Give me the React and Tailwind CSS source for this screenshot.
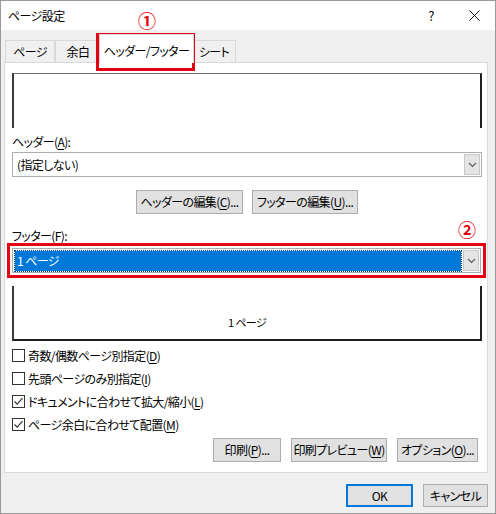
import React from "react";

const U = ({ children }) => <span className="underline underline-offset-2">{children}</span>;

const Btn = ({ className = "", children }) => (
  <div className={`h-[24px] flex items-center justify-center bg-[#e1e1e1] border border-[#adadad] ${className}`}>
    <span className="whitespace-nowrap">{children}</span>
  </div>
);

const Chevron = () => (
  <svg width="9" height="6" viewBox="0 0 9 6">
    <path d="M1 1 L4.5 4.5 L8 1" fill="none" stroke="#555" strokeWidth="1.1" />
  </svg>
);

const Select = ({ selected, children }) => (
  <div className="h-[25px] flex bg-white border border-[#abadb3] p-[1px]">
    <div className="flex-1 flex items-center">
      {selected ? (
        <div className="h-[20px] w-full ml-[1px] mr-[2px] flex items-center bg-[#0078d7] text-white pl-[2px] outline-1 outline-dotted outline-[#0a3d6b]">
          {children}
        </div>
      ) : (
        <div className="pl-[3px]">{children}</div>
      )}
    </div>
    <div className="w-[16px] flex items-center justify-center bg-[#e5e5e5] border border-[#c8c8c8]">
      <Chevron />
    </div>
  </div>
);

const Check = ({ checked, children }) => (
  <div className="h-[23px] flex items-center">
    <span className="w-[13px] h-[13px] border border-[#333] bg-white flex items-center justify-center">
      {checked && (
        <svg width="11" height="11" viewBox="0 0 11 11">
          <path d="M1.5 5.5 L4.2 8.2 L9.5 2.2" fill="none" stroke="#333" strokeWidth="1.2" />
        </svg>
      )}
    </span>
    <span className="ml-[3px] whitespace-nowrap">{children}</span>
  </div>
);

const Tab = ({ active, className = "", children }) =>
  active ? (
    <div className={`relative z-10 -mb-px h-[29px] bg-white border border-b-0 border-[#d9d9d9] flex items-center justify-center pt-[3px] whitespace-nowrap ${className}`}>
      {children}
    </div>
  ) : (
    <div className={`h-[22px] bg-[#f0f0f0] border border-b-0 border-[#d9d9d9] flex items-center justify-center whitespace-nowrap ${className}`}>
      {children}
    </div>
  );

export default function App() {
  return (
    <div className="relative w-[496px] h-[514px] flex flex-col bg-[#f0f0f0] border border-[#9a9a9a] text-[12px] tracking-[-0.6px] text-black font-['Noto_Sans_CJK_JP',sans-serif] [font-feature-settings:'palt']">
      {/* title bar */}
      <div className="h-[29px] bg-white flex items-center pl-[7px]">
        <span className="flex-1">ページ設定</span>
        <span className="w-[14px] text-center mr-[31px] text-[13px]">?</span>
        <svg width="11" height="11" viewBox="0 0 11 11" className="mr-[15px]">
          <path d="M0.5 0.5 L10.5 10.5 M10.5 0.5 L0.5 10.5" stroke="#111" strokeWidth="1" />
        </svg>
      </div>

      {/* tabs */}
      <div className="h-[32px] flex items-end pl-[4px]">
        <Tab className="w-[50px]">ページ</Tab>
        <Tab className="w-[46px]">余白</Tab>
        <Tab active className="w-[95px] -mx-[2px]">ヘッダー/フッター</Tab>
        <Tab className="w-[44px]">シート</Tab>
      </div>

      {/* panel */}
      <div className="ml-[3px] w-[484px] bg-white border border-[#d9d9d9] pt-[10px] pb-[10px] pl-[7px] pr-[5px] flex flex-col">
        <div className="h-[55px] border-t border-t-[#6b6b6b] border-l-2 border-l-[#3a3a3a] border-r-2 border-r-[#1e1e1e]" />

        <div className="mt-[6px] h-[16px] leading-[16px]">
          ヘッダー(<U>A</U>):
        </div>
        <div className="mt-[2px]">
          <Select>(指定しない)</Select>
        </div>

        <div className="mt-[13px] flex justify-center gap-[9px]">
          <Btn className="w-[107px]">
            ヘッダーの編集(<U>C</U>)...
          </Btn>
          <Btn className="w-[106px]">
            フッターの編集(<U>U</U>)...
          </Btn>
        </div>

        <div className="mt-[15px] h-[14px] leading-[14px]">
          フッター(<U>F</U>):
        </div>
        <div className="-ml-[5px] -mr-[4px] border-[3px] border-[#e60012] p-[2px]">
          <Select selected>1 ページ</Select>
        </div>

        <div className="mt-[8px] h-[55px] border-l-2 border-l-[#3a3a3a] border-r-2 border-r-[#1e1e1e] border-b-2 border-b-[#1e1e1e] flex items-end justify-center pb-[9px] text-[11px]">
          1 ページ
        </div>

        <div className="mt-[3px] flex flex-col">
          <Check>
            奇数/偶数ページ別指定(<U>D</U>)
          </Check>
          <Check>
            先頭ページのみ別指定(<U>I</U>)
          </Check>
          <Check checked>
            ドキュメントに合わせて拡大/縮小(<U>L</U>)
          </Check>
          <Check checked>
            ページ余白に合わせて配置(<U>M</U>)
          </Check>
        </div>

        <div className="mt-[2px] flex justify-end gap-[10px] pr-[4px]">
          <Btn className="w-[68px]">
            印刷(<U>P</U>)...
          </Btn>
          <Btn className="w-[96px]">
            印刷プレビュー(<U>W</U>)
          </Btn>
          <Btn className="w-[81px]">
            オプション(<U>O</U>)...
          </Btn>
        </div>
      </div>

      {/* dialog buttons */}
      <div className="flex justify-end gap-[10px] pt-[11px] pr-[7px]">
        <div className="w-[67px] h-[23px] flex items-center justify-center bg-[#e1e1e1] border-2 border-[#0078d7]">OK</div>
        <div className="w-[65px] h-[23px] flex items-center justify-center bg-[#e1e1e1] border border-[#adadad]">キャンセル</div>
      </div>

      {/* annotations */}
      <div className="absolute left-[95px] top-[32px] w-[99px] h-[38px] border-[3px] border-[#e60012] pointer-events-none" />
      <div className="absolute left-[137px] top-[9px] text-[18px] leading-[20px] font-bold text-[#e60012]">①</div>
      <div className="absolute left-[457px] top-[218px] text-[18px] leading-[20px] font-bold text-[#e60012]">②</div>
    </div>
  );
}
